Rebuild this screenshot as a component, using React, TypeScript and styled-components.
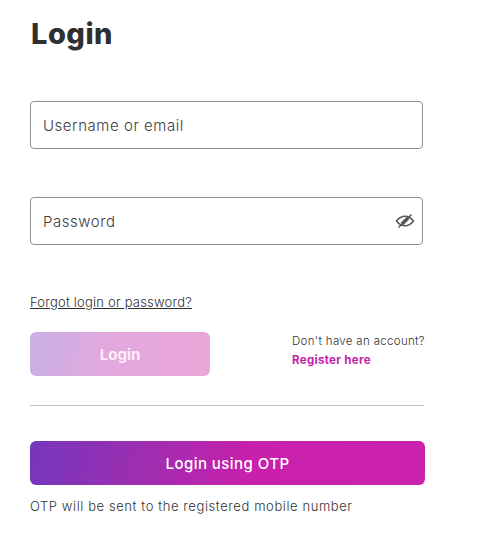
import React from "react";
import styled, { createGlobalStyle } from "styled-components";

const GlobalStyle = createGlobalStyle`
  html, body {
    margin: 0;
    padding: 0;
    background: #fff;
  }
  * {
    box-sizing: border-box;
  }
`;

const Page = styled.div`
  width: 494px;
  height: 534px;
  padding: 15px 0 0 30px;
  font-family: Inter, "Liberation Sans", sans-serif;
  color: #3a3a3a;
  overflow: hidden;
`;

const Title = styled.h1`
  margin: 0 0 48px;
  padding-left: 1px;
  font-size: 29px;
  line-height: 38px;
  font-weight: 800;
  letter-spacing: 0.5px;
  color: #2f2f2f;
`;

const Field = styled.div`
  width: 393px;
  height: 48px;
  margin-bottom: 48px;
  padding: 0 7px 0 12px;
  display: flex;
  align-items: center;
  justify-content: space-between;
  border: 1px solid #8f8f8f;
  border-radius: 4px;
  font-size: 15px;
  font-weight: 300;
  letter-spacing: 0.54px;
  color: #3d3d3d;
`;

const ForgotLink = styled.a`
  display: block;
  margin-bottom: 21px;
  font-size: 13px;
  font-weight: 300;
  line-height: 18px;
  letter-spacing: 0.21px;
  color: #2f2f2f;
  text-decoration: underline;
`;

const ActionRow = styled.div`
  width: 395px;
  display: flex;
  justify-content: space-between;
  align-items: flex-start;
`;

const LoginButton = styled.button`
  width: 180px;
  height: 44px;
  border: 0;
  border-radius: 6px;
  background: linear-gradient(100deg, #c8b0e6 0%, #e3a8de 45%, #eaa6d8 100%);
  color: #fdeefa;
  font: 700 15px Inter, "Liberation Sans", sans-serif;
`;

const RegisterBox = styled.div`
  width: 133px;
  font-size: 11.5px;
  font-weight: 300;
  line-height: 19px;
  letter-spacing: 0.32px;
  color: #333;
`;

const RegisterLink = styled.a`
  display: block;
  font-weight: 700;
  color: #c322a8;
`;

const Divider = styled.hr`
  width: 394px;
  margin: 29px 0 35px;
  border: 0;
  border-top: 1px solid #bdbdbd;
`;

const OtpButton = styled.button`
  width: 395px;
  height: 44px;
  border: 0;
  border-radius: 6px;
  background: linear-gradient(100deg, #7437bd 0%, #a02db0 30%, #c720ac 55%, #cb22ae 100%);
  color: #fff;
  font: 500 15px Inter, "Liberation Sans", sans-serif;
  letter-spacing: 0.45px;
`;

const Note = styled.p`
  margin: 12px 0 0;
  font-size: 13px;
  font-weight: 300;
  line-height: 18px;
  letter-spacing: 0.59px;
  color: #333;
`;

const EyeIcon: React.FC = () => (
  <svg width="20" height="20" viewBox="0 0 20 20" fill="none" stroke="#555">
    <path d="M1.5 10C4 6.800 6.800 5.200 10 5.200s6 1.600 8.500 4.800C16 13.200 13.200 14.800 10 14.800S4 13.200 1.500 10Z" strokeWidth="1.500" />
    <path d="M3.500 16.500 16.500 3.500" strokeWidth="1.500" />
    <path d="M7 13 13 7" strokeWidth="3.500" />
  </svg>
);

const App: React.FC = () => {
  return (
    <Page>
      <GlobalStyle />
      <Title>Login</Title>
      <Field>Username or email</Field>
      <Field>
        Password
        <EyeIcon />
      </Field>
      <ForgotLink>Forgot login or password?</ForgotLink>
      <ActionRow>
        <LoginButton>Login</LoginButton>
        <RegisterBox>
          Don't have an account?
          <RegisterLink>Register here</RegisterLink>
        </RegisterBox>
      </ActionRow>
      <Divider />
      <OtpButton>Login using OTP</OtpButton>
      <Note>OTP will be sent to the registered mobile number</Note>
    </Page>
  );
};

export default App;
